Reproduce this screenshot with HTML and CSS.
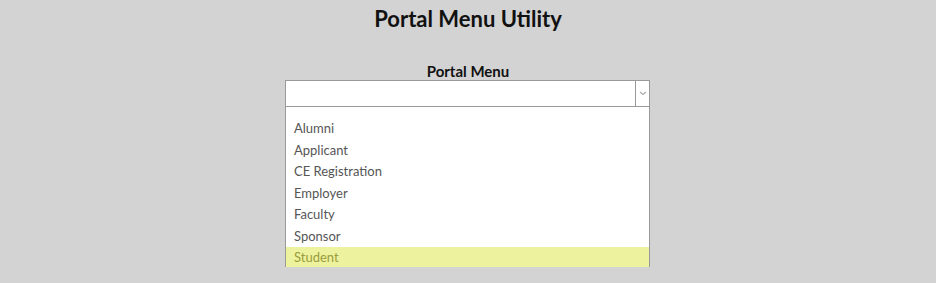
FILE: index.html
```html
<!DOCTYPE html>
<html>
<head>
<meta charset="utf-8">
<link rel="stylesheet" href="styles.css">
</head>
<body>
<h1 class="title">Portal Menu Utility</h1>
<div class="field">
  <div class="label">Portal Menu</div>
  <div class="select">
    <div class="value"></div>
    <div class="arrow">
      <svg width="8" height="5" viewBox="0 0 8 5"><path d="M1 1 L4 3.5 L7 1" fill="none" stroke="#aaa" stroke-width="1.2"/></svg>
    </div>
  </div>
  <ul class="list">
    <li>Alumni</li>
    <li>Applicant</li>
    <li>CE Registration</li>
    <li>Employer</li>
    <li>Faculty</li>
    <li>Sponsor</li>
    <li class="active">Student</li>
  </ul>
</div>
</body>
</html>
```
FILE: styles.css
```css
html, body {
  margin: 0;
  padding: 0;
  background: #d3d3d3;
  font-family: "Lato", "Noto Sans", sans-serif;
}
.title {
  margin: 0;
  padding-top: 6px;
  text-align: center;
  font-size: 22px;
  font-weight: 700;
  line-height: 26px;
  color: #111;
}
.field {
  width: 365px;
  margin: 31px auto 0 285px;
  display: flex;
  flex-direction: column;
}
.label {
  text-align: center;
  font-size: 15px;
  font-weight: 700;
  line-height: 17px;
  color: #111;
  margin-left: 1px;
}
.select {
  display: flex;
  height: 25px;
  background: #fff;
  border: 1px solid #999;
  width: 363px;
}
.value {
  flex: 1;
}
.arrow {
  width: 13px;
  border-left: 1px solid #999;
  display: flex;
  align-items: center;
  justify-content: center;
}
.list {
  list-style: none;
  margin: 0;
  padding: 11px 0 0 0;
  background: #fff;
  border: 1px solid #999;
  border-top: none;
  height: 148px;
}
.list li {
  padding-left: 8px;
  font-size: 13px;
  line-height: 21.5px;
  height: 21.5px;
  color: #555;
}
.list li.active {
  background: #edf29e;
  color: #9a9c3c;
}
```
